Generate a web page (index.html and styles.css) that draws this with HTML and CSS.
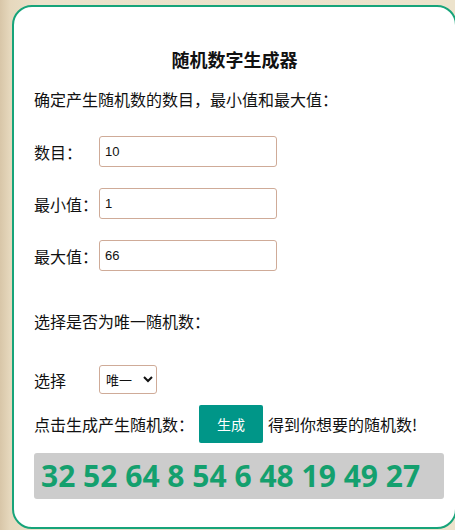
FILE: index.html
```html
<!DOCTYPE html>
<html lang="zh-CN">
<head>
  <meta charset="UTF-8">
  <title>随机数字生成器</title>
  <link rel="stylesheet" href="styles.css">
</head>
<body>

  <div class="card">
    <h2>随机数字生成器</h2>
    <p class="tip">确定产生随机数的数目，最小值和最大值：</p>

    <div class="row">
      <label for="count">数目：</label>
      <input type="text" id="count" value="10">
    </div>
    <div class="row">
      <label for="min">最小值：</label>
      <input type="text" id="min" value="1">
    </div>
    <div class="row">
      <label for="max">最大值：</label>
      <input type="text" id="max" value="66">
    </div>

    <p class="tip tip-unique">选择是否为唯一随机数：</p>

    <div class="row row-select">
      <label for="unique">选择</label>
      <select id="unique">
        <option>唯一</option>
        <option>不唯一</option>
      </select>
    </div>

    <div class="row row-btn">
      <span>点击生成产生随机数：</span>
      <button>生成</button>
      <span>得到你想要的随机数!</span>
    </div>

    <div class="result">32 52 64 8 54 6 48 19 49 27</div>
  </div>

</body>
</html>
```

FILE: styles.css
```css
html, body {
  height: 100%;
}

body {
  margin: 0;
  padding: 5px 0 0 12px;
  box-sizing: border-box;
  font-family: "Noto Sans CJK SC", "Noto Sans", sans-serif;
  font-size: 16px;
  color: #111;
  background: linear-gradient(to right, #d8c6a8 0, #e6d8bd 10px, #ece2cb 40px, #ede3cc 100%);
  overflow: hidden;
}

.card {
  width: 445px;
  height: 524px;
  box-sizing: border-box;
  background: #fff;
  border: 2px solid #17a47a;
  border-radius: 20px;
  padding: 40px 20px 0;
}

h2 {
  margin: 0;
  font-size: 18px;
  line-height: 24px;
  text-align: center;
  font-weight: bold;
}

.tip {
  margin: 16px 0 0;
  line-height: 24px;
}

.row {
  display: flex;
  align-items: center;
  margin-top: 21px;
}

.row:first-of-type {
  margin-top: 25px;
}

.tip + .row {
  margin-top: 25px;
}

.row label {
  width: 65px;
  flex-shrink: 0;
}

input[type="text"] {
  width: 178px;
  height: 31px;
  box-sizing: border-box;
  border: 1px solid #cfab98;
  border-radius: 3px;
  padding: 0 5px;
  font-family: "Liberation Sans", Arial, sans-serif;
  font-size: 13px;
  color: #111;
  outline: none;
}

.tip-unique {
  margin-top: 38px;
}

.row-select {
  margin-top: 32px !important;
}

select {
  width: 58px;
  height: 29px;
  border: 1px solid #cfab98;
  border-radius: 3px;
  background: #fff;
  font-family: "Noto Sans CJK SC", sans-serif;
  font-size: 13px;
  color: #111;
  padding: 0 2px;
}

.row-btn {
  margin-top: 11px;
  gap: 5px;
}

button {
  width: 64px;
  height: 38px;
  background: #009688;
  color: #fff;
  border: none;
  border-radius: 2px;
  font-family: "Noto Sans CJK SC", sans-serif;
  font-size: 14px;
  cursor: pointer;
}

.result {
  margin-top: 10px;
  width: 410px;
  height: 46px;
  box-sizing: border-box;
  background: #cccccc;
  border-radius: 3px;
  padding-left: 7px;
  font-family: "Noto Sans", sans-serif;
  font-weight: bold;
  font-size: 30px;
  line-height: 46px;
  color: #14a06e;
  white-space: nowrap;
}
```
